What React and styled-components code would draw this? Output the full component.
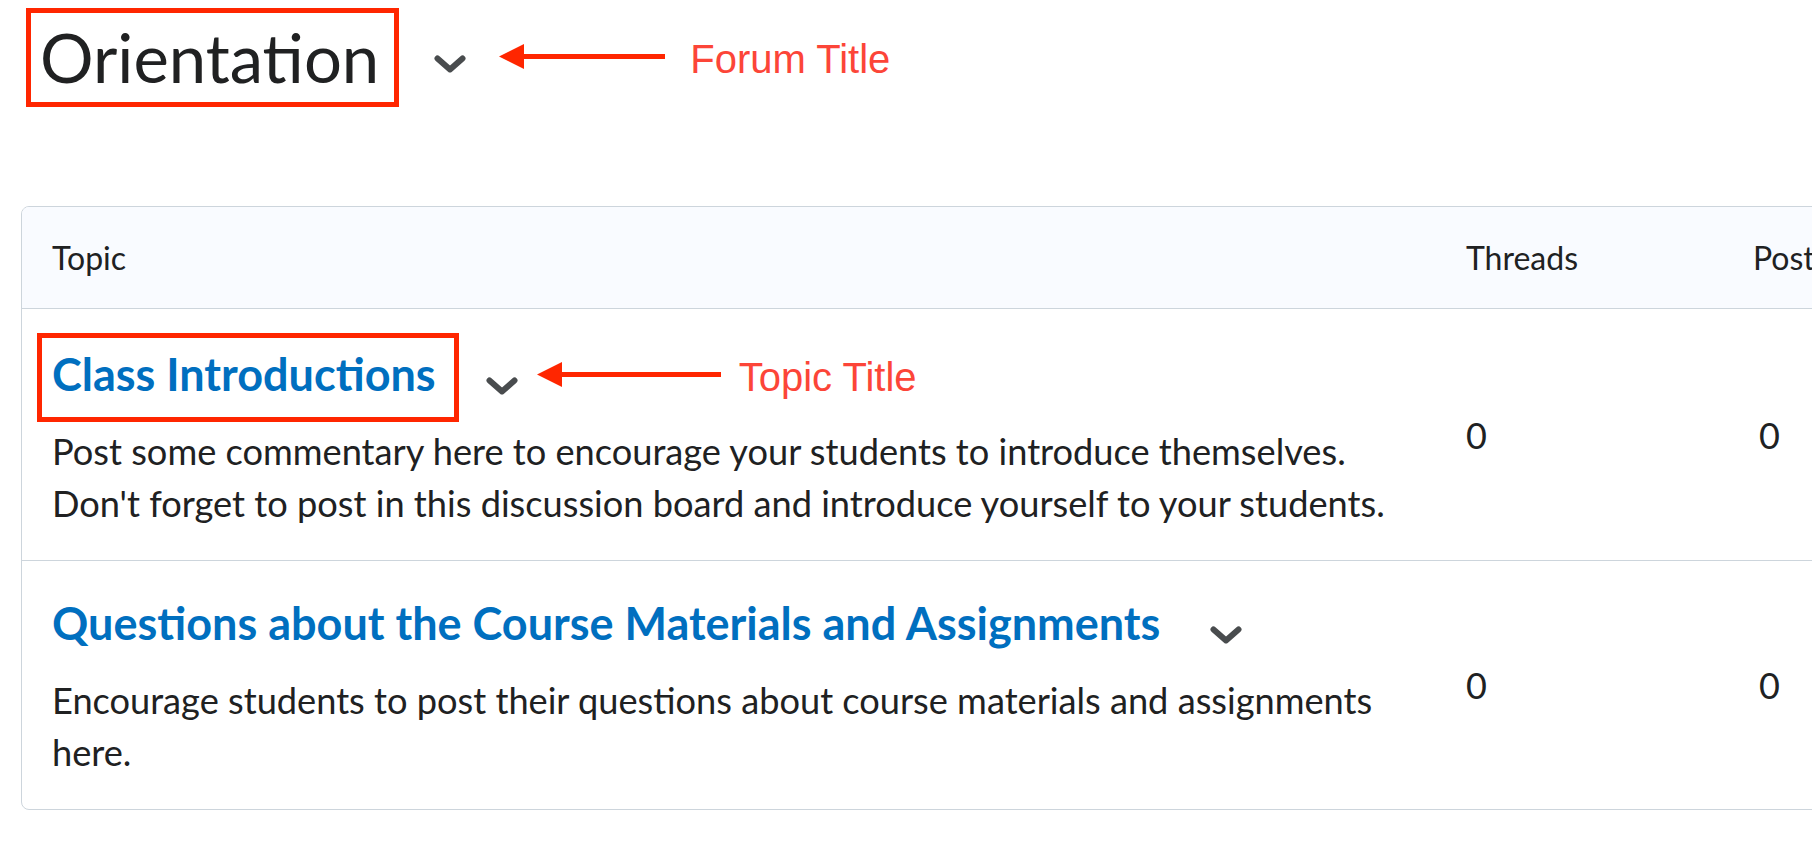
import React from "react";
import styled, { createGlobalStyle } from "styled-components";

const GlobalStyle = createGlobalStyle`
  html, body {
    margin: 0;
    overflow: hidden;
    background: #ffffff;
  }
  body {
    font-family: Lato, "Open Sans", sans-serif;
    color: #202122;
  }
`;

const Page = styled.div`
  padding: 23px 0 0 21px;
  width: 1900px;
`;

const ForumHeader = styled.div`
  display: flex;
  align-items: center;
  height: 68px;
  padding-left: 19px;
`;

// red annotation frame drawn over the title
const Boxed = styled.span`
  position: relative;
  display: inline-block;
  &::after {
    content: "";
    position: absolute;
    top: ${(p) => p.$t}px;
    right: ${(p) => p.$r}px;
    bottom: ${(p) => p.$b}px;
    left: ${(p) => p.$l}px;
    border: 5px solid #ff2600;
    pointer-events: none;
  }
`;

const ForumTitle = styled.h1`
  margin: 0;
  font-size: 67px;
  font-weight: 400;
  line-height: 68px;
  color: #202122;
`;

const ChevronWrap = styled.span`
  display: inline-flex;
  margin-left: ${(p) => p.$gap}px;
  margin-top: ${(p) => p.$drop}px;
`;

const ArrowWrap = styled.span`
  display: inline-flex;
  margin-left: ${(p) => p.$gap}px;
`;

const Note = styled.span`
  margin-left: ${(p) => p.$gap}px;
  margin-top: 4px;
  font-family: "Liberation Sans", Arial, sans-serif;
  font-size: 40px;
  line-height: 40px;
  color: #fc4538;
`;

const Table = styled.div`
  margin-top: 115px;
  width: 1900px;
  border: 1px solid #cdd5dc;
  border-radius: 8px;
  overflow: hidden;
`;

const Row = styled.div`
  display: grid;
  grid-template-columns: 1414px 287px 1fr;
  border-top: ${(p) => (p.$first ? "none" : "1px solid #cdd5dc")};
`;

const HeadRow = styled(Row)`
  height: 101px;
  align-items: center;
  background: #f9fbff;
  font-size: 32px;
`;

const HeadCell = styled.div`
  padding-left: 30px;
`;

const TopicCell = styled.div`
  padding: ${(p) => p.$top}px 26px 31px 30px;
`;

const TitleLine = styled.div`
  display: flex;
  align-items: center;
  height: 53px;
`;

const TopicLink = styled.a`
  font-size: 45px;
  font-weight: 700;
  line-height: 53px;
  color: #006fbf;
  text-decoration: none;
  white-space: nowrap;
`;

const Description = styled.p`
  margin: 24px 0 0;
  font-size: 36.2px;
  line-height: 52px;
`;

const CountCell = styled.div`
  align-self: center;
  padding-left: ${(p) => p.$pad || 30}px;
  font-size: 36px;
  line-height: 52px;
`;

const Chevron = ({ gap, drop }) => (
  <ChevronWrap $gap={gap} $drop={drop}>
    <svg width="32" height="18" viewBox="0 0 32 18">
      <path
        d="M3.5 3.5 L16 14.5 L28.5 3.5"
        fill="none"
        stroke="#494c4e"
        strokeWidth="6"
        strokeLinecap="round"
        strokeLinejoin="round"
      />
    </svg>
  </ChevronWrap>
);

const Arrow = ({ length, gap }) => (
  <ArrowWrap $gap={gap}>
    <svg width={length} height="26" viewBox={`0 0 ${length} 26`}>
      <polygon points="0,12.5 25,0 25,25" fill="#ff2600" />
      <rect x="24" y="10" width={length - 24} height="5" fill="#ff2600" />
    </svg>
  </ArrowWrap>
);

const topics = [
  {
    id: 1,
    title: "Class Introductions",
    text: "Post some commentary here to encourage your students to introduce themselves. Don't forget to post in this discussion board and introduce yourself to your students.",
    threads: 0,
    posts: 0,
    note: "Topic Title",
    top: 39,
  },
  {
    id: 2,
    title: "Questions about the Course Materials and Assignments",
    text: "Encourage students to post their questions about course materials and assignments here.",
    threads: 0,
    posts: 0,
    top: 36,
  },
];

export default function App() {
  return (
    <>
      <GlobalStyle />
      <Page>
        <ForumHeader>
          <Boxed $t={-15} $r={-20} $b={-16} $l={-14}>
            <ForumTitle>Orientation</ForumTitle>
          </Boxed>
          <Chevron gap={55} drop={14} />
          <Arrow length={166} gap={33} />
          <Note $gap={25}>Forum Title</Note>
        </ForumHeader>

        <Table>
          <HeadRow $first>
            <HeadCell>Topic</HeadCell>
            <HeadCell>Threads</HeadCell>
            <HeadCell>Posts</HeadCell>
          </HeadRow>
          {topics.map((t) => (
            <Row key={t.id}>
              <TopicCell $top={t.top}>
                <TitleLine>
                  {t.note ? (
                    <Boxed $t={-15} $r={-23} $b={-21} $l={-15}>
                      <TopicLink href="#">{t.title}</TopicLink>
                    </Boxed>
                  ) : (
                    <TopicLink href="#">{t.title}</TopicLink>
                  )}
                  <Chevron gap={50} drop={22} />
                  {t.note && <Arrow length={184} gap={19} />}
                  {t.note && <Note $gap={18}>{t.note}</Note>}
                </TitleLine>
                <Description>{t.text}</Description>
              </TopicCell>
              <CountCell>{t.threads}</CountCell>
              <CountCell $pad={36}>{t.posts}</CountCell>
            </Row>
          ))}
        </Table>
      </Page>
    </>
  );
}
